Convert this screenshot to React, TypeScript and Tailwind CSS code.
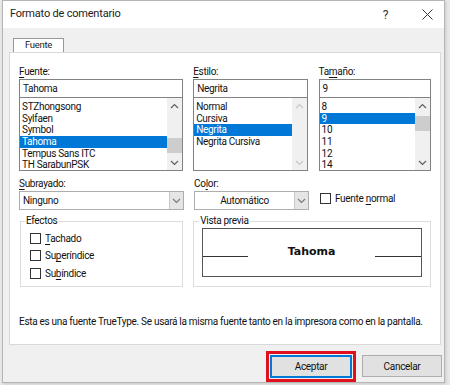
import React from "react";

const font = { fontFamily: 'Roboto, "Noto Sans", sans-serif' };

function U({ children }: { children: React.ReactNode }) {
  return <span className="underline underline-offset-[2px] decoration-[1px]">{children}</span>;
}

function ChevUp({ color = "#606060" }: { color?: string }) {
  return (
    <svg width="9" height="6" viewBox="0 0 9 6">
      <path d="M1 5 L4.5 1.5 L8 5" fill="none" stroke={color} strokeWidth="1.2" />
    </svg>
  );
}
function ChevDown({ color = "#606060" }: { color?: string }) {
  return (
    <svg width="9" height="6" viewBox="0 0 9 6">
      <path d="M1 1 L4.5 4.5 L8 1" fill="none" stroke={color} strokeWidth="1.2" />
    </svg>
  );
}

function Scrollbar({ disabled, thumbTop, thumbH }: { disabled?: boolean; thumbTop?: number; thumbH?: number }) {
  const c = disabled ? "#c8c8c8" : "#606060";
  return (
    <div className="w-[15px] h-full bg-[#f0f0f0] flex flex-col items-center justify-between relative">
      <div className="h-[15px] flex items-center justify-center"><ChevUp color={c} /></div>
      {!disabled && thumbTop !== undefined && (
        <div className="absolute left-0 w-[15px] bg-[#cdcdcd]" style={{ top: thumbTop, height: thumbH }} />
      )}
      <div className="h-[15px] flex items-center justify-center"><ChevDown color={c} /></div>
    </div>
  );
}

function ListBox({ items, selected, disabled, thumbTop, thumbH }: { items: string[]; selected: number; disabled?: boolean; thumbTop?: number; thumbH?: number }) {
  return (
    <div className="h-[74px] border border-[#828282] bg-white flex">
      <div className="flex-1 flex flex-col pt-[3px]">
        {items.map((it, i) => (
          <div
            key={i}
            className={`h-[11.7px] leading-[11.7px] pl-[2px] whitespace-nowrap ${i === selected ? "bg-[#0078d7] text-white" : "text-[#111]"}`}
          >
            {it}
          </div>
        ))}
      </div>
      <Scrollbar disabled={disabled} thumbTop={thumbTop} thumbH={thumbH} />
    </div>
  );
}

function TextBox({ value }: { value: string }) {
  return (
    <div className="h-[18px] border border-[#828282] border-b-0 bg-white flex items-center pl-[3px] text-[#111]">{value}</div>
  );
}

function Combo({ value, center }: { value: string; center?: boolean }) {
  return (
    <div className="h-[19px] border border-[#adadad] bg-white flex">
      <div className={`flex-1 flex items-center text-[#111] ${center ? "justify-center" : "pl-[3px]"}`}>{value}</div>
      <div className="w-[14px] bg-[#e5e5e5] border-l border-[#c8c8c8] flex items-center justify-center">
        <ChevDown color="#7a7a7a" />
      </div>
    </div>
  );
}

function Check({ children }: { children: React.ReactNode }) {
  return (
    <div className="flex items-center gap-[4px] h-[12px]">
      <div className="w-[11px] h-[11px] border border-[#333] bg-white" />
      <span className="text-[#111]">{children}</span>
    </div>
  );
}

export default function App() {
  return (
    <div className="w-[450px] h-[385px] bg-[#e9e9e9] overflow-hidden text-[10px] tracking-[-0.3px]" style={font}>
      <div className="ml-[2px] w-[443px] h-[383px] bg-[#f0f0f0] border border-[#b5b5b5] flex flex-col shadow-[1px_1px_3px_rgba(0,0,0,0.15)]">
        {/* Title bar */}
        <div className="h-[27px] bg-white flex items-center pl-[7px] pr-[11px]">
          <span className="text-[11px] tracking-[-0.2px] text-[#222] flex-1">Formato de comentario</span>
          <span className="text-[12px] text-[#333] mr-[34px]">?</span>
          <svg width="11" height="11" viewBox="0 0 11 11">
            <path d="M0.5 0.5 L10.5 10.5 M10.5 0.5 L0.5 10.5" stroke="#333" strokeWidth="1" />
          </svg>
        </div>
        {/* Tab */}
        <div className="pl-[8px] pt-[10px] flex">
          <div className="ml-[2px] w-[51px] h-[14px] border border-[#999] border-b-0 bg-white flex items-center justify-center text-[#222] text-[9.5px]">Fuente</div>
        </div>
        {/* Panel */}
        <div className="ml-[6px] mr-[3px] h-[293px] bg-white border border-[#d9d9d9] pl-[9px] pr-[9px] flex flex-col">
          <div className="flex gap-[10px] mt-[11px]">
            <div className="w-[165px] flex flex-col">
              <div className="h-[15px] text-[#111]"><U>F</U>uente:</div>
              <TextBox value="Tahoma" />
              <ListBox items={["STZhongsong", "Sylfaen", "Symbol", "Tahoma", "Tempus Sans ITC", "TH SarabunPSK"]} selected={3} thumbTop={40} thumbH={15} />
            </div>
            <div className="w-[115px] flex flex-col">
              <div className="h-[15px] text-[#111]"><U>E</U>stilo:</div>
              <TextBox value="Negrita" />
              <ListBox items={["Normal", "Cursiva", "Negrita", "Negrita Cursiva"]} selected={2} disabled />
            </div>
            <div className="w-[113px] ml-[1px] flex flex-col">
              <div className="h-[15px] text-[#111]">Ta<U>m</U>año:</div>
              <TextBox value="9" />
              <ListBox items={["8", "9", "10", "11", "12", "14"]} selected={1} thumbTop={18} thumbH={15} />
            </div>
          </div>
          <div className="flex gap-[10px] mt-[7px]">
            <div className="w-[165px] flex flex-col">
              <div className="h-[12px] leading-[12px] text-[#111] mb-[1px]"><U>S</U>ubrayado:</div>
              <Combo value="Ninguno" />
            </div>
            <div className="w-[115px] flex flex-col">
              <div className="h-[12px] leading-[12px] text-[#111] mb-[1px]">Co<U>l</U>or:</div>
              <Combo value="Automático" center />
            </div>
            <div className="flex items-end pb-[6px] ml-[1px]">
              <Check>Fuente <U>n</U>ormal</Check>
            </div>
          </div>
          <div className="flex gap-[10px] mt-[5px]">
            <div className="w-[165px] h-[72px] relative pt-[6px] pl-[1px]">
              <div className="h-full border border-[#dcdcdc] flex flex-col pl-[9px] pt-[10px] gap-[5.5px]">
                <Check><U>T</U>achado</Check>
                <Check>Su<U>p</U>eríndice</Check>
                <Check>Su<U>b</U>índice</Check>
              </div>
              <span className="absolute left-[6px] top-0 bg-white px-[1px] text-[#111] leading-[12px]">Efectos</span>
            </div>
            <div className="w-[239px] h-[72px] relative pt-[6px]">
              <div className="h-full border border-[#dcdcdc] flex flex-col items-center pt-[6px]">
                <div className="w-[220px] h-[49px] border border-[#555] flex items-center relative">
                  <div className="w-[45px] h-px bg-[#333] mt-[8px]" />
                  <div className="flex-1 text-center font-bold text-[11px] tracking-normal text-[#111] -mt-[1px]" style={{ fontFamily: '"DejaVu Sans", sans-serif' }}>Tahoma</div>
                  <div className="w-[46px] h-px bg-[#333] mt-[8px]" />
                </div>
              </div>
              <span className="absolute left-[6px] top-0 bg-white px-[1px] text-[#111] leading-[12px]">Vista previa</span>
            </div>
          </div>
          <div className="mt-[27px] text-[#111] whitespace-nowrap">Esta es una fuente TrueType. Se usará la misma fuente tanto en la impresora como en la pantalla.</div>
        </div>
        {/* Buttons */}
        <div className="flex justify-end items-start gap-[6px] pr-[2px] mt-[6px]">
          <div className="border-[3px] border-[#e0101c] p-[1px]">
            <div className="w-[82px] h-[23px] bg-[#e1e1e1] border border-[#0078d7] flex items-center justify-center text-[#111] shadow-[inset_0_0_0_1px_#0078d7]">Aceptar</div>
          </div>
          <div className="w-[80px] h-[22px] mt-[4px] bg-[#e1e1e1] border border-[#adadad] flex items-center justify-center text-[#111]">Cancelar</div>
        </div>
      </div>
    </div>
  );
}
